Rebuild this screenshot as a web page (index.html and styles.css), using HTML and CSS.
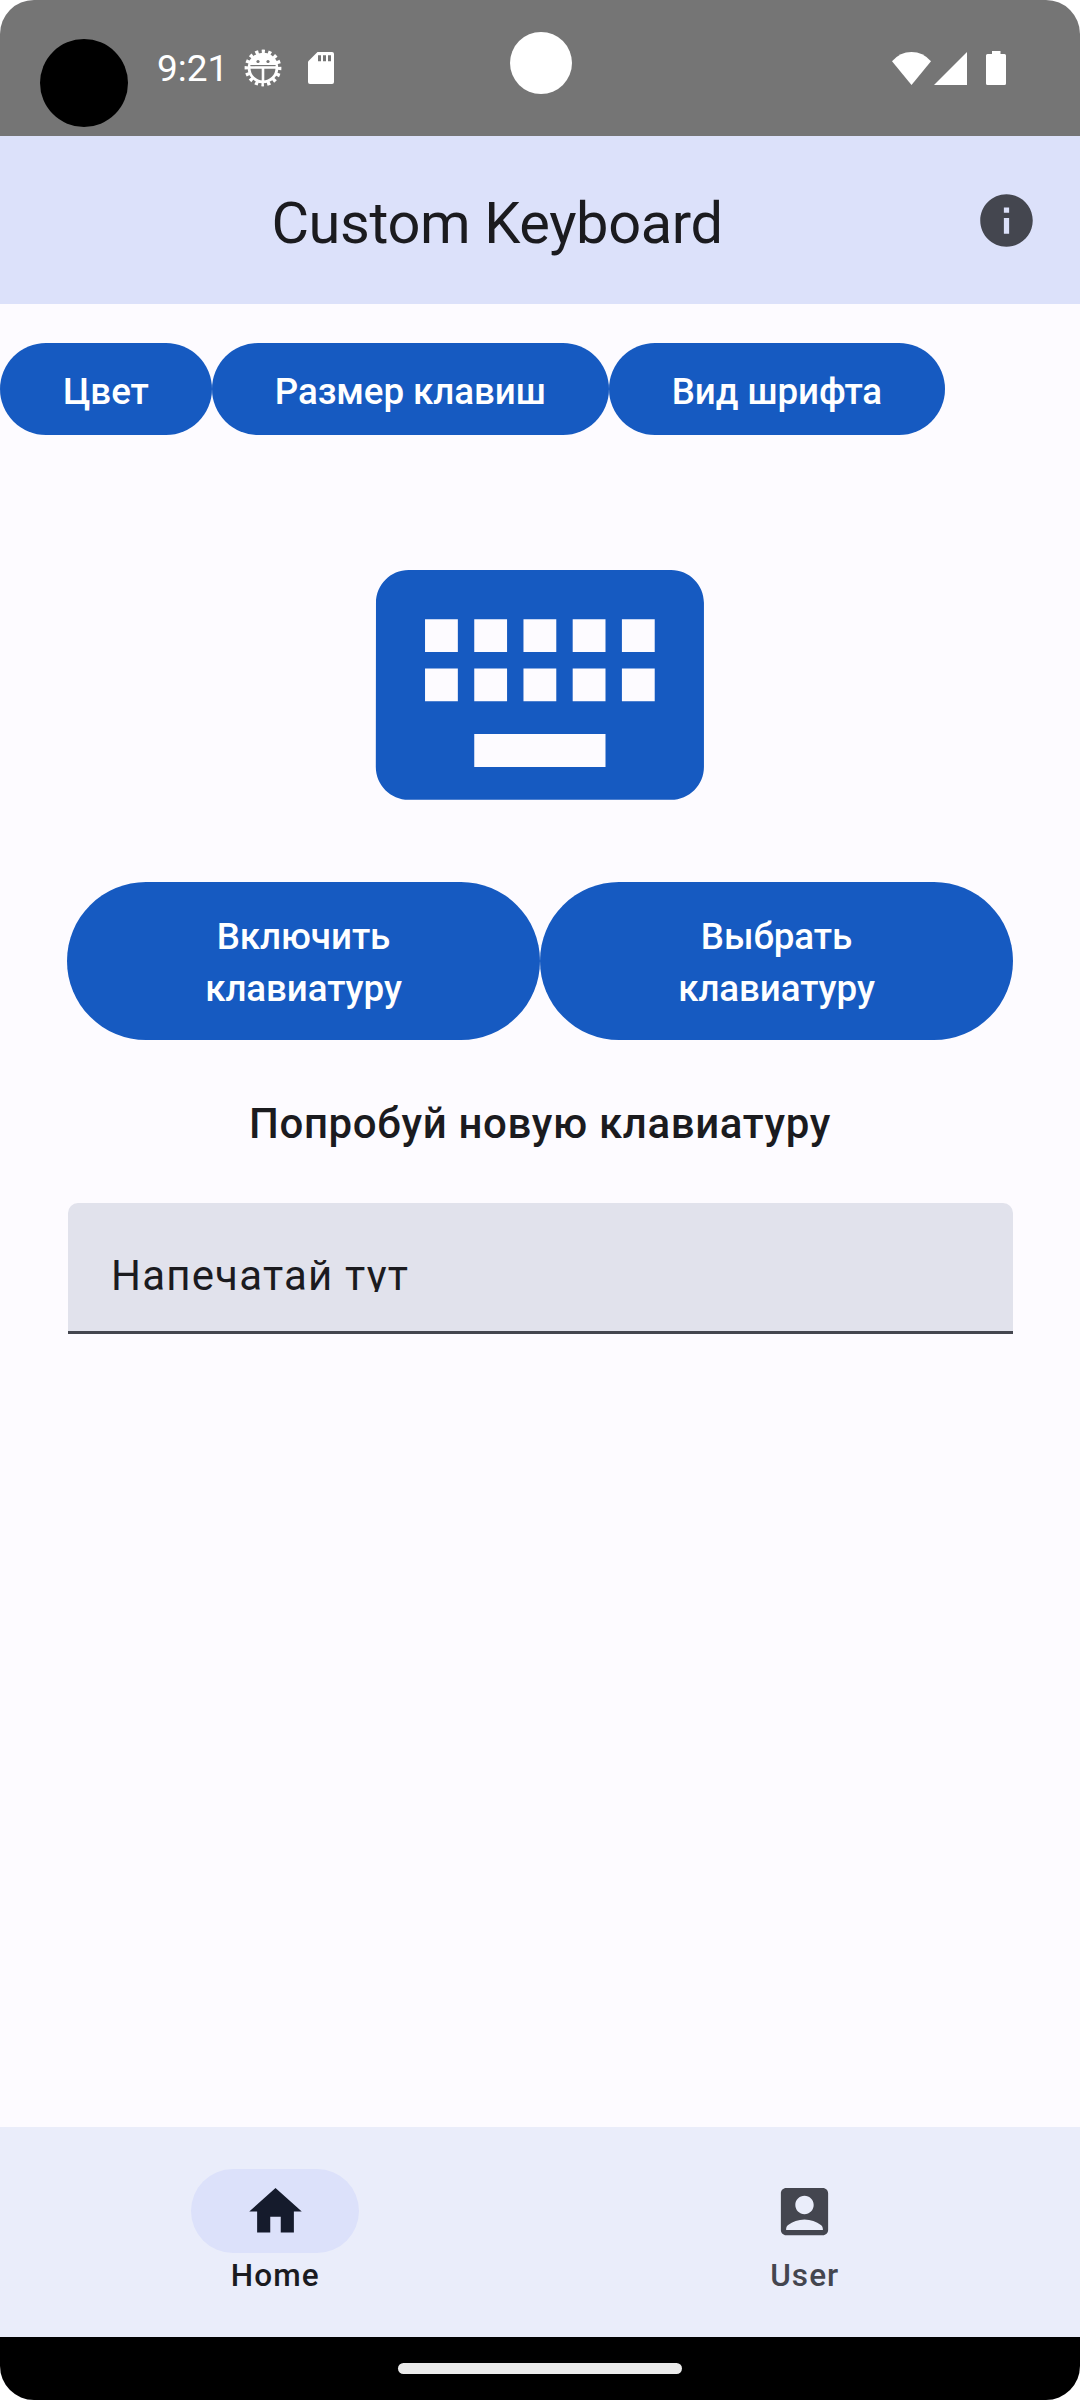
FILE: index.html
```html
<!DOCTYPE html>
<html lang="ru">
<head>
<meta charset="utf-8">
<title>Custom Keyboard</title>
<link rel="stylesheet" href="styles.css">
</head>
<body>
<div class="screen">
  <header class="status-bar">
    <span class="assistant-dot"></span>
    <span class="camera"></span>
    <div class="status-left">
      <span class="clock">9:21</span>
      <svg class="bug-icon" viewBox="-20 -20 40 40">
        <circle r="16.4" fill="none" stroke="#fff" stroke-width="4" stroke-dasharray="3.2 3.240" stroke-dashoffset="1.6" transform="rotate(90)"/>
        <circle r="13.900" fill="none" stroke="#fff" stroke-width="2.800"/>
        <path d="M-13-3A13.300 13.300 0 0 1 13-3z" fill="#fff"/>
        <path d="M-13-.6H13M0 0V14" stroke="#fff" stroke-width="2.600"/>
        <path d="M-12.500-2.400H12.500" stroke="#757575" stroke-width="1.200"/>
        <circle cx="-5" cy="-6.500" r="1.600" fill="#757575"/>
        <circle cx="5" cy="-6.500" r="1.600" fill="#757575"/>
      </svg>
      <svg class="sd-icon" viewBox="0 0 26 32">
        <path d="M9.500 0H24q2 0 2 2V30q0 2-2 2H2q-2 0-2-2V9.500z" fill="#fff"/>
        <path d="M10 3.300h3v6h-3zM15 3.300h3v6h-3zM20 3.300h3v6h-3z" fill="#757575"/>
      </svg>
    </div>
    <div class="status-right">
      <svg class="wifi-icon" viewBox="0 0 39 33"><path d="M0 9.300Q8 0 19.500 0T39 9.300L19.500 33z" fill="#fff"/></svg>
      <svg class="signal-icon" viewBox="0 0 33 33"><path d="M33 0V33H0z" fill="#fff"/></svg>
      <svg class="battery-icon" viewBox="0 0 20 34"><path d="M6 0h8.500v3H18.500Q20 3 20 4.500V32.500Q20 34 18.500 34H1.500Q0 34 0 32.500V4.500Q0 3 1.500 3H6z" fill="#fff"/></svg>
    </div>
  </header>

  <div class="app-bar">
    <h1 class="app-title">Custom Keyboard</h1>
    <svg class="info-icon" viewBox="0 0 24 24"><path d="M12 2C6.480 2 2 6.480 2 12s4.480 10 10 10 10-4.480 10-10S17.520 2 12 2zm1 15h-2v-6h2v6zm0-8h-2V7h2v2z"/></svg>
  </div>

  <main class="content">
    <div class="chips">
      <button class="btn chip">Цвет</button>
      <button class="btn chip">Размер клавиш</button>
      <button class="btn chip">Вид шрифта</button>
    </div>
    <svg class="keyboard-icon" viewBox="0 0 24 24"><path d="M20 5H4c-1.100 0-1.990.9-1.990 2L2 17c0 1.100.9 2 2 2h16c1.100 0 2-.9 2-2V7c0-1.100-.9-2-2-2zm-9 3h2v2h-2V8zm0 3h2v2h-2v-2zM8 8h2v2H8V8zm0 3h2v2H8v-2zm-1 2H5v-2h2v2zm0-3H5V8h2v2zm9 7H8v-2h8v2zm0-4h-2v-2h2v2zm0-3h-2V8h2v2zm3 3h-2v-2h2v2zm0-3h-2V8h2v2z"/></svg>
    <div class="actions">
      <button class="btn action">Включить<br>клавиатуру</button>
      <button class="btn action">Выбрать<br>клавиатуру</button>
    </div>
    <p class="prompt">Попробуй новую клавиатуру</p>
    <div class="field"><span class="field-text">Напечатай тут</span></div>
  </main>

  <nav class="nav-bar">
    <div class="nav-item nav-item-active">
      <span class="indicator"><svg class="nav-icon" viewBox="0 0 24 24"><path d="M10 20v-6h4v6h5v-8h3L12 3 2 12h3v8z"/></svg></span>
      <span class="nav-label">Home</span>
    </div>
    <div class="nav-item">
      <span class="indicator"><svg class="nav-icon" viewBox="0 0 24 24"><path d="M19 3H5c-1.100 0-2 .9-2 2v14c0 1.100.9 2 2 2h14c1.100 0 2-.9 2-2V5c0-1.100-.9-2-2-2zm-7 3c1.930 0 3.500 1.570 3.500 3.500S13.930 13 12 13s-3.500-1.570-3.500-3.500S10.070 6 12 6zm7 13H5v-.23c0-.62.28-1.200.76-1.580C7.470 15.820 9.640 15 12 15s4.530.82 6.240 2.190c.48.38.76.97.76 1.580V19z"/></svg></span>
      <span class="nav-label">User</span>
    </div>
  </nav>
  <footer class="gesture-bar"><span class="handle"></span></footer>
</div>
</body>
</html>
```
FILE: styles.css
```css
* { box-sizing: border-box; }

body {
  margin: 0;
  background: #fff;
  font-family: Roboto, "Noto Sans", sans-serif;
  color: #1b1b1f;
}

svg { display: block; flex: none; }

.screen {
  display: flex;
  flex-direction: column;
  width: 1080px;
  height: 2400px;
  border-radius: 34px;
  overflow: hidden;
  background: #fdfbff;
}

/* System status bar */
.status-bar {
  position: relative;
  display: flex;
  justify-content: space-between;
  height: 136px;
  padding: 0 74px 0 157px;
  background: #757575;
}
.assistant-dot,
.camera {
  position: absolute;
  border-radius: 50%;
}
.assistant-dot { left: 40px; top: 39px; width: 88px; height: 88px; background: #000; }
.camera { left: 509.5px; top: 31.5px; width: 62px; height: 62px; background: #fff; }
.status-left,
.status-right { display: flex; align-items: center; height: 136px; }
.clock {
  width: 86px;
  padding-top: 1px;
  font-size: 37px;
  line-height: 44px;
  color: #fff;
}
.bug-icon { width: 40px; height: 40px; }
.sd-icon { width: 26px; height: 32px; margin-left: 25px; }
.wifi-icon { width: 39px; height: 33px; }
.signal-icon { width: 33px; height: 33px; margin-left: 3px; }
.battery-icon { width: 20px; height: 34px; margin-left: 19px; }

/* Top app bar */
.app-bar {
  display: flex;
  align-items: center;
  height: 168px;
  padding: 0 42px 0 21px;
  background: #dce1fa;
}
.app-title {
  flex: 1;
  margin: 0;
  padding: 5px 2px 0 0;
  text-align: center;
  font-size: 57.75px;
  font-weight: 400;
  line-height: 74px;
  letter-spacing: -0.38px;
}
.info-icon { width: 63px; height: 63px; fill: #44464f; }

/* Main content */
.content { flex: 1; }
.btn {
  border: 0;
  background: #165ac1;
  color: #fff;
  font: 500 36.75px/52.5px Roboto, "Noto Sans", sans-serif;
  letter-spacing: -0.08px;
}
.chips { display: flex; padding-top: 39px; }
.chip {
  height: 92px;
  padding: 6px 63px 0;
  border-radius: 46px;
  white-space: nowrap;
}
.keyboard-icon {
  width: 393.75px;
  height: 393.75px;
  margin: 53px auto 0;
  fill: #165ac1;
}
.actions { display: flex; padding: 0 67px; }
.action {
  flex: 1;
  height: 158px;
  margin-top: 0.25px;
  padding: 4px 0 0;
  border-radius: 79px;
}
.prompt {
  margin: 52px 0 0;
  text-align: center;
  font-size: 42px;
  font-weight: 500;
  line-height: 63px;
  letter-spacing: 0.64px;
}
.field {
  height: 131px;
  margin: 48px 67px 0 68px;
  padding: 41px 43px 0;
  border-bottom: 3px solid #44464f;
  border-radius: 10px 10px 0 0;
  background: #e1e2ec;
}
.field-text {
  display: block;
  height: 48px;
  overflow: hidden;
  font-size: 42px;
  line-height: 63px;
  letter-spacing: 1.2px;
}

/* Bottom navigation */
.nav-bar {
  display: flex;
  gap: 21px;
  height: 210px;
  padding: 42px 21px 0;
  background: #eaedfa;
}
.nav-item {
  flex: 1;
  display: flex;
  flex-direction: column;
  align-items: center;
  color: #44464f;
}
.indicator {
  display: flex;
  align-items: center;
  justify-content: center;
  width: 168px;
  height: 84px;
  border-radius: 42px;
}
.nav-item-active { color: #1b1b1f; }
.nav-item-active .indicator { background: #dce1fa; color: #151b2c; }
.nav-icon { width: 63px; height: 63px; fill: currentColor; }
.nav-label {
  padding-top: 2px;
  font-size: 31.5px;
  font-weight: 500;
  line-height: 42px;
  letter-spacing: 1.1px;
}
.gesture-bar {
  display: flex;
  align-items: center;
  justify-content: center;
  height: 63px;
  background: #000;
}
.handle { width: 284px; height: 11px; border-radius: 5.5px; background: #ebebeb; }
```
